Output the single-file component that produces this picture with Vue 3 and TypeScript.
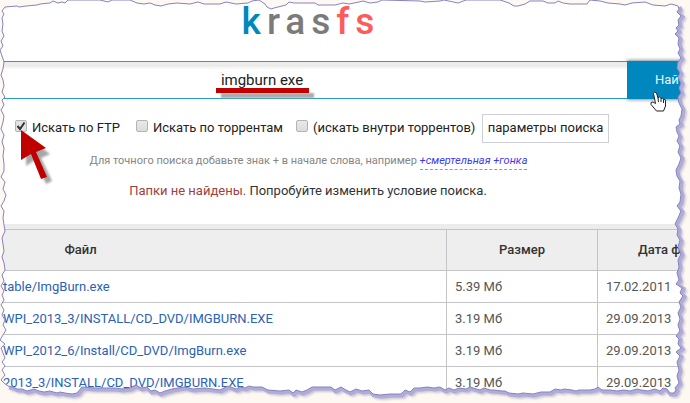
<script setup lang="ts">
import { ref } from 'vue'

interface FileRow {
  path: string
  size: string
  date: string
}

const query = ref('imgburn exe')
const byFtp = ref(true)
const byTorrents = ref(false)
const insideTorrents = ref(false)

const rows: FileRow[] = [
  { path: 'table/ImgBurn.exe', size: '5.39 Мб', date: '17.02.2011' },
  { path: 'WPI_2013_3/INSTALL/CD_DVD/IMGBURN.EXE', size: '3.19 Мб', date: '29.09.2013' },
  { path: 'WPI_2012_6/Install/CD_DVD/ImgBurn.exe', size: '3.19 Мб', date: '29.09.2013' },
  { path: '2013_3/INSTALL/CD_DVD/IMGBURN.EXE', size: '3.19 Мб', date: '29.09.2013' },
]

// Torn paper outline, clockwise from the top left corner
const top = '5,7 17,6 19,7 26,6 37,5 40,4 50,3 53,1 58,3 62,2 65,3 68,0 100,0 108,2 112,0 130,0 137,3 144,4 150,3 155,5 161,6 168,4 177,3 190,4 198,2 204,4 220,4 226,2 236,4 248,3 252,1 259,0 265,4 267,7 271,9 274,8 282,6 286,5 289,2 294,3 315,3 318,5 335,5 343,3 349,4 359,2 363,1 370,3 378,2 382,0 420,1 425,2 440,1 444,0 458,3 466,0 500,0 509,3 514,6 518,6 525,4 530,1 543,1 548,3 555,3 558,1 563,3 570,4 587,4 590,0 600,1 608,3 620,4 625,5 632,3 645,2 653,5 665,6 671,4 675,5'
const right = '678,6 679,9 677,12 681,16 678,20 679,25 676,28 678,31 675,34 679,38 678,44 680,49 678,53 681,58 678,62 677,68 680,73 678,77 681,83 679,88 681,93 678,97 679,103 682,109 681,116 679,120 680,124 676,127 677,132 679,136 677,141 680,146 678,152 681,158 679,164 676,170 677,176 680,181 679,188 681,194 680,202 677,206 681,211 678,218 675,224 678,229 677,235 680,240 678,247 681,254 678,260 679,267 677,273 679,280 676,284 682,288 680,293 683,296 679,302 681,307 678,313 680,319 678,325 680,331 676,336 679,339 678,344 681,348 676,352 680,356 677,362 679,370 677,376 679,383 675,388 676,390'
const bottom = '674,393 670,393 667,389 663,388 660,391 655,389 648,391 641,390 637,389 630,391 624,390 617,391 610,390 602,390 598,387 595,389 590,390 579,390 576,391 572,390 564,389 561,390 555,389 550,392 541,392 533,394 523,393 518,394 509,393 505,391 502,391 494,390 490,390 484,388 480,390 470,387 466,389 459,388 454,390 449,388 445,390 440,387 434,388 427,387 420,388 414,388 410,392 405,390 401,394 390,394 380,395 373,394 369,390 362,391 356,389 350,392 346,390 341,387 335,390 331,387 312,387 307,390 302,392 296,390 293,393 289,390 280,391 268,390 262,387 253,387 249,386 245,388 240,387 236,389 228,386 220,390 213,389 204,388 193,389 185,387 178,388 172,389 165,391 160,393 155,390 151,391 147,387 141,388 136,385 130,388 122,389 115,388 105,388 95,388 82,387 77,393 72,394 65,393 60,392 57,393 50,391 44,392 39,391 34,389 27,391 22,389 17,389 13,387 8,386'
const left = '4,383 1,380 5,375 2,370 5,366 2,362 5,358 3,353 1,348 5,344 0,340 3,335 6,330 3,325 5,320 2,315 4,310 1,305 4,300 2,295 4,291 1,286 4,281 2,275 5,270 4,263 2,257 4,251 3,244 2,238 5,231 4,225 3,218 4,211 1,206 4,201 6,195 3,189 5,182 1,177 4,171 4,164 3,156 4,148 2,142 4,135 1,129 3,122 4,116 1,110 4,105 2,100 5,97 2,92 4,86 3,80 1,75 3,69 4,62 2,56 0,50 3,46 1,41 4,36 2,31 3,24 2,18 4,14 2,11'

const toPath = (points: string): string => points.split(' ').join('L')
const tear = `M${toPath([top, right, bottom, left].join(' '))}Z`
const outside = `M-5-5H700V410H-5Z${tear}`
const thickEdge = `M${toPath([right, bottom].join(' '))}`
</script>

<template>
  <main class="page">
    <header class="brand" aria-label="krasfs">
      <span class="brand-k">k</span><span>ras</span><span class="brand-fs">fs</span>
    </header>

    <form class="search" @submit.prevent>
      <div class="field">
        <input v-model="query" class="query" type="text" aria-label="Поиск" />
        <span class="underline"></span>
      </div>
      <button class="find" type="submit">Найти</button>
    </form>

    <div class="options">
      <label class="option first"><input v-model="byFtp" type="checkbox" />Искать по FTP</label>
      <label class="option second"><input v-model="byTorrents" type="checkbox" />Искать по торрентам</label>
      <label class="option third"><input v-model="insideTorrents" type="checkbox" />(искать внутри торрентов)</label>
      <button class="params" type="button">параметры поиска</button>
    </div>

    <p class="hint">
      Для точного поиска добавьте знак + в начале слова, например
      <a href="#">+смертельная +гонка</a>
    </p>
    <p class="message"><span>Папки не найдены.</span> Попробуйте изменить условие поиска.</p>

    <table class="files">
      <thead>
        <tr>
          <th class="file">Файл</th>
          <th class="size">Размер</th>
          <th class="date">Дата ф</th>
        </tr>
      </thead>
      <tbody>
        <tr v-for="row in rows" :key="row.path">
          <td><a href="#">{{ row.path }}</a></td>
          <td>{{ row.size }}</td>
          <td>{{ row.date }}</td>
        </tr>
      </tbody>
    </table>

    <svg class="tear" viewBox="0 0 690 403" preserveAspectRatio="none" aria-hidden="true">
      <defs>
        <filter id="soft" x="-5%" y="-5%" width="110%" height="110%">
          <feGaussianBlur stdDeviation="1" />
        </filter>
        <clipPath id="margin"><path :d="outside" clip-rule="evenodd" /></clipPath>
      </defs>
      <path :d="outside" fill="#fdf8f1" fill-rule="evenodd" />
      <g clip-path="url(#margin)">
        <path :d="thickEdge" transform="translate(3 3)" fill="none" stroke="#c9c5d6" stroke-width="4" filter="url(#soft)" />
        <path :d="thickEdge" transform="translate(1 1)" fill="none" stroke="#b0acd6" stroke-width="5" />
      </g>
      <path :d="tear" fill="none" stroke="#8583c4" stroke-width="1" />
    </svg>

    <svg class="arrow" viewBox="0 0 40 64" aria-hidden="true">
      <path d="M6 6V36L15 30L26 54L32 51L21 28L30 24Z" fill="#777" opacity=".65" filter="url(#soft)" />
      <path d="M1 0V30L11 24L21 49L27 47L16 22L26 18Z" fill="#c00000" />
    </svg>

    <svg class="hand" viewBox="0 0 17 21" aria-hidden="true">
      <path d="M5.5 12.500L3.500 2.500Q4-.0 6.500 2L8 7Q9.500 4.500 11 7.500Q12.500 6 13.500 8.500Q15.500 7.500 15.500 10V15L13.500 20H6.500L1 13.500Q.2 10.500 3 11Z" fill="#fff" stroke="#222" stroke-linejoin="round" />
      <path d="M8 7L8.500 11M11 7.500V11M13.500 8.500V12" fill="none" stroke="#222" />
    </svg>
  </main>
</template>

<style>
body {
  margin: 0;
  background: #fdf8f1;
}
</style>

<style scoped>
.page {
  position: relative;
  min-height: 100vh;
  max-height: 100vh;
  overflow: hidden;
  background: #fff;
  color: #333;
  font: 13px/20px Roboto, "Liberation Sans", sans-serif;
}

.page * {
  box-sizing: border-box;
}

.brand {
  height: 61px;
  padding-right: 68px;
  text-align: center;
  font-size: 37px;
  font-weight: 500;
  line-height: 44px;
  letter-spacing: 6px;
  color: #7b7b7b;
}

.brand-k {
  color: #0087bd;
}

.brand-fs {
  color: #ff5a5a;
}

.search {
  display: flex;
  height: 38px;
}

.field {
  position: relative;
  flex: 1;
}

.query {
  width: 100%;
  height: 100%;
  padding: 0 103px 0 0;
  border: solid #2b9bc9;
  border-width: 1px 0;
  outline: 0;
  background: #fff;
  box-shadow: inset 0 5px #ececec, inset 0 7px #faf6f1;
  color: #222;
  font: inherit;
  font-size: 15px;
  text-align: center;
}

.underline {
  position: absolute;
  left: 216px;
  top: 27px;
  width: 93px;
  height: 5px;
  background: #c00000;
  box-shadow: 5px 5px 2px #aaa;
}

.find {
  width: 63px;
  padding: 0 0 0 28px;
  border: 0;
  background: #0087bd;
  box-shadow: 0 0 4px #456;
  color: #e8f5fb;
  font: inherit;
  text-align: left;
}

.options {
  display: flex;
  align-items: center;
  height: 30px;
  margin-top: 14px;
  padding-left: 15px;
  color: #222;
  white-space: nowrap;
}

.option {
  display: flex;
  align-items: center;
}

.option input {
  flex: none;
  width: 12px;
  height: 12px;
  margin: 0 5px 4px 0;
  border: 1px solid #b4b4b4;
  border-radius: 2px;
  appearance: none;
  background: linear-gradient(#e8e8e8, #dcdcdc);
}

.option input:checked {
  background: url("data:image/svg+xml,%3Csvg xmlns='http://www.w3.org/2000/svg' viewBox='0 0 10 10'%3E%3Cpath d='M1.500 5l2.500 3 4.500-6.500' fill='none' stroke='%23333' stroke-width='2'/%3E%3C/svg%3E") #e2e2e2;
}

.first {
  width: 121px;
}

.second {
  width: 160px;
}

.third {
  width: 186px;
}

.params {
  width: 127px;
  height: 29px;
  padding: 0;
  border: 1px solid #cfcfdb;
  background: #fff;
  color: #222;
  font: inherit;
}

.hint {
  margin: 8px 0 0;
  padding-right: 73px;
  color: #858585;
  font-size: 11px;
  text-align: center;
}

.hint a {
  padding-bottom: 2px;
  border-bottom: 1px dashed #999;
  color: #3b3bf0;
  font-style: italic;
  text-decoration: none;
}

.message {
  margin: 10px 0 23px;
  padding-right: 74px;
  text-align: center;
}

.message span {
  color: #a04040;
}

.files {
  width: 100%;
  border-top: 5px solid #ececec;
  border-collapse: separate;
  border-spacing: 0;
  table-layout: fixed;
}

.files th {
  height: 42px;
  padding: 0;
  border: solid #c4c4c8;
  border-width: 1px 1px 1px 0;
  background: #eee;
  font-weight: 500;
}

.files .file {
  padding-right: 285px;
}

.files .size {
  width: 151px;
}

.files .date {
  width: 92px;
  padding-left: 40px;
  text-align: left;
}

.files td {
  height: 32px;
  padding: 0 8px;
  border: solid #c4c4c8;
  border-width: 0 1px 1px 0;
  color: #555;
  white-space: nowrap;
}

.files td:first-child {
  padding-left: 3px;
}

.files a {
  color: #2a62b5;
  text-decoration: none;
}

.tear {
  position: absolute;
  inset: 0;
  width: 100%;
  height: 100%;
  pointer-events: none;
}

.arrow {
  position: absolute;
  left: 20px;
  top: 130px;
  width: 40px;
  height: 64px;
}

.hand {
  position: absolute;
  left: 650px;
  top: 91px;
  width: 17px;
  height: 21px;
}
</style>
